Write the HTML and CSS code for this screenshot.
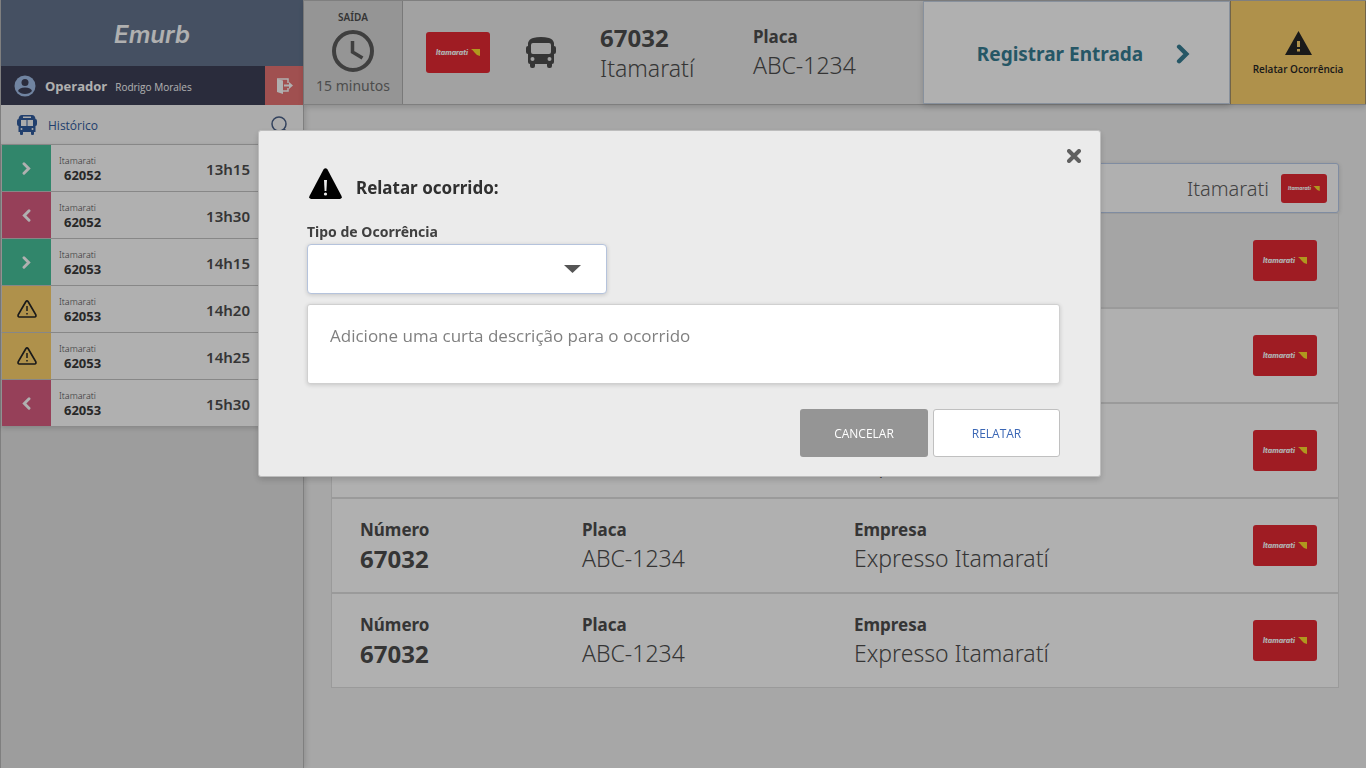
FILE: index.html
```html
<!DOCTYPE html>
<html lang="pt-BR">
<head>
<meta charset="utf-8">
<meta name="viewport" content="width=device-width, initial-scale=1">
<title>Emurb - Relatar ocorrido</title>
<link rel="stylesheet" href="styles.css">
</head>
<body>
<svg class="symbols" aria-hidden="true">
  <symbol id="bus" viewBox="0 0 30 31">
    <path fill="currentColor" fill-rule="evenodd" d="M7 1Q15-1 23 1Q27 2 28 6V9Q30 9 30 11V15Q30 17 28 17V25Q28 27 26 27V29Q26 31 24 31H23Q21 31 21 29V27H9V29Q9 31 7 31H6Q4 31 4 29V27Q2 27 2 25V17Q0 17 0 15V11Q0 9 2 9V6Q3 2 7 1ZM7 6Q5 6 5 8V15Q5 17 7 17H23Q25 17 25 15V8Q25 6 23 6ZM6.500 20A2 2 0 1 0 6.500 24A2 2 0 1 0 6.500 20ZM23.500 20A2 2 0 1 0 23.500 24A2 2 0 1 0 23.500 20Z"/>
  </symbol>
  <symbol id="bus-split" viewBox="0 0 20 20">
    <path fill="currentColor" fill-rule="evenodd" d="M5 0H15Q18 0 18.500 4Q20 4 20 6V9Q20 11 18.500 11V17H17V19Q17 20 16 20H15Q14 20 14 19V17H6V19Q6 20 5 20H4Q3 20 3 19V17H1.500V11Q0 11 0 9V6Q0 4 1.500 4Q2 0 5 0ZM6 1.500V3H14V1.500ZM4 5V11H9.500V5ZM10.500 5V11H16V5ZM4.500 13A1 1 0 1 0 4.500 15A1 1 0 1 0 4.500 13ZM15.500 13A1 1 0 1 0 15.500 15A1 1 0 1 0 15.500 13Z"/>
  </symbol>
  <symbol id="chevron" viewBox="0 0 12 18">
    <path d="M2.500 2.500L9 9L2.500 15.500" fill="none" stroke="currentColor" stroke-width="4" stroke-linecap="round"/>
  </symbol>
  <symbol id="warning-line" viewBox="0 0 20 18">
    <path d="M8.800 1.800Q10 0 11.200 1.800L18.700 14.500Q19.500 16.800 17.500 17H2.500Q.5 16.800 1.300 14.500Z" fill="none" stroke="currentColor" stroke-width="1.700"/>
    <path d="M10 6V11M10 13V14.500" stroke="currentColor" stroke-width="1.500"/>
  </symbol>
  <symbol id="flag" viewBox="0 0 9 7">
    <path fill="currentColor" d="M0 0H9V7Q5 6 3.500 3.500Q2 1 0 0Z"/>
  </symbol>
</svg>

<div class="app">
  <aside class="sidebar">
    <div class="brand">Emurb</div>
    <div class="user">
      <svg class="avatar" viewBox="0 0 22 22" aria-hidden="true"><circle cx="11" cy="11" r="10.500" fill="#a3bfe9"/><circle cx="11" cy="7.500" r="3.500" fill="#3e4158"/><path d="M4 16Q5 12.500 11 12.500T18 16Q15.500 19 11 19T4 16Z" fill="#3e4158"/></svg>
      <strong class="user-role">Operador</strong>
      <span class="user-name">Rodrigo Morales</span>
      <button class="logout" type="button" aria-label="Sair">
        <svg width="17" height="16" viewBox="0 0 17 16" aria-hidden="true"><path d="M1 1L7 2.500V16L1 14Z" fill="currentColor"/><path d="M1 1H12V5M12 10V13H7" fill="none" stroke="currentColor" stroke-width="1.500"/><path d="M8 6.500H13V4L17 7.500L13 11V8.500H8Z" fill="currentColor"/></svg>
      </button>
    </div>
    <div class="history-head">
      <svg class="history-bus" aria-hidden="true"><use href="#bus-split"/></svg>
      <h2>Histórico</h2>
      <button class="search-button" type="button" aria-label="Buscar">
        <svg width="18" height="18" viewBox="0 0 18 18" aria-hidden="true"><circle cx="8" cy="8" r="7" fill="none" stroke="currentColor" stroke-width="1.500"/><path d="M13 13L17 17" stroke="currentColor" stroke-width="1.500"/></svg>
      </button>
    </div>
    <ul class="history">
      <li><span class="tag tag-in"><svg class="arrow"><use href="#chevron"/></svg></span><span class="trip"><small>Itamarati</small><b>62052</b></span><time>13h15</time></li>
      <li><span class="tag tag-out"><svg class="arrow arrow-left"><use href="#chevron"/></svg></span><span class="trip"><small>Itamarati</small><b>62052</b></span><time>13h30</time></li>
      <li><span class="tag tag-in"><svg class="arrow"><use href="#chevron"/></svg></span><span class="trip"><small>Itamarati</small><b>62053</b></span><time>14h15</time></li>
      <li><span class="tag tag-alert"><svg class="alert"><use href="#warning-line"/></svg></span><span class="trip"><small>Itamarati</small><b>62053</b></span><time>14h20</time></li>
      <li><span class="tag tag-alert"><svg class="alert"><use href="#warning-line"/></svg></span><span class="trip"><small>Itamarati</small><b>62053</b></span><time>14h25</time></li>
      <li><span class="tag tag-out"><svg class="arrow arrow-left"><use href="#chevron"/></svg></span><span class="trip"><small>Itamarati</small><b>62053</b></span><time>15h30</time></li>
    </ul>
  </aside>

  <div class="content">
    <header class="topbar">
      <div class="departure">
        <span class="departure-label">SAÍDA</span>
        <svg class="clock" viewBox="0 0 42 42" aria-hidden="true"><circle cx="21" cy="21" r="19" fill="none" stroke="currentColor" stroke-width="4"/><path d="M20.500 11V22L30.500 28" fill="none" stroke="currentColor" stroke-width="3.500"/></svg>
        <span class="departure-time">15 minutos</span>
      </div>
      <div class="current">
        <span class="logo"><span>Itamarati</span><svg><use href="#flag"/></svg></span>
        <svg class="current-bus" aria-hidden="true"><use href="#bus"/></svg>
        <div class="current-id"><strong>67032</strong><span>Itamaratí</span></div>
        <dl class="field"><dt>Placa</dt><dd>ABC-1234</dd></dl>
      </div>
      <button class="register" type="button">Registrar Entrada <svg><use href="#chevron"/></svg></button>
      <button class="report" type="button">
        <svg width="27" height="24" viewBox="0 0 27 24" aria-hidden="true"><path fill="currentColor" fill-rule="evenodd" d="M13.500 0L27 24H0ZM12 10V16H15V10ZM12 18V20.500H15V18Z"/></svg>
        Relatar Ocorrência
      </button>
    </header>

    <main class="fleet">
      <div class="filter">
        <input type="search" aria-label="Buscar veículo">
        <span class="filter-company">Itamarati</span>
        <span class="logo logo-small"><span>Itamarati</span><svg><use href="#flag"/></svg></span>
      </div>
      <ul class="vehicles">
        <li class="selected"><dl class="field"><dt>Número</dt><dd class="number">67032</dd></dl><dl class="field"><dt>Placa</dt><dd>ABC-1234</dd></dl><dl class="field"><dt>Empresa</dt><dd>Expresso Itamaratí</dd></dl><span class="logo"><span>Itamarati</span><svg><use href="#flag"/></svg></span></li>
        <li><dl class="field"><dt>Número</dt><dd class="number">67032</dd></dl><dl class="field"><dt>Placa</dt><dd>ABC-1234</dd></dl><dl class="field"><dt>Empresa</dt><dd>Expresso Itamaratí</dd></dl><span class="logo"><span>Itamarati</span><svg><use href="#flag"/></svg></span></li>
        <li><dl class="field"><dt>Número</dt><dd class="number">67032</dd></dl><dl class="field"><dt>Placa</dt><dd>ABC-1234</dd></dl><dl class="field"><dt>Empresa</dt><dd>Expresso Itamaratí</dd></dl><span class="logo"><span>Itamarati</span><svg><use href="#flag"/></svg></span></li>
        <li><dl class="field"><dt>Número</dt><dd class="number">67032</dd></dl><dl class="field"><dt>Placa</dt><dd>ABC-1234</dd></dl><dl class="field"><dt>Empresa</dt><dd>Expresso Itamaratí</dd></dl><span class="logo"><span>Itamarati</span><svg><use href="#flag"/></svg></span></li>
        <li><dl class="field"><dt>Número</dt><dd class="number">67032</dd></dl><dl class="field"><dt>Placa</dt><dd>ABC-1234</dd></dl><dl class="field"><dt>Empresa</dt><dd>Expresso Itamaratí</dd></dl><span class="logo"><span>Itamarati</span><svg><use href="#flag"/></svg></span></li>
      </ul>
    </main>
  </div>
</div>

<div class="overlay">
  <form class="modal" role="dialog" aria-modal="true" aria-labelledby="modal-title">
    <button class="close" type="button" aria-label="Fechar">
      <svg width="14" height="14" viewBox="0 0 14 14" aria-hidden="true"><path d="M2 2L12 12M12 2L2 12" stroke="currentColor" stroke-width="4" stroke-linecap="round"/></svg>
    </button>
    <h1 class="modal-title" id="modal-title">
      <svg width="33" height="31" viewBox="0 0 33 31" aria-hidden="true"><path d="M14.500 1.500Q16.500-1 18.500 1.500L32.500 28Q33.500 30.500 31 31H2Q-.5 30.500 .5 28Z"/><path d="M15 12H18L17.400 23H15.600Z" fill="#ebebeb"/><circle cx="16.500" cy="26" r="1.600" fill="#ebebeb"/></svg>
      Relatar ocorrido:
    </h1>
    <label class="type-label" for="type">Tipo de Ocorrência</label>
    <select class="type" id="type"><option></option></select>
    <textarea class="description" aria-label="Descrição" placeholder="Adicione uma curta descrição para o ocorrido"></textarea>
    <div class="actions">
      <button class="cancel" type="button">CANCELAR</button>
      <button class="submit" type="submit">RELATAR</button>
    </div>
  </form>
</div>
</body>
</html>
```
FILE: styles.css
```css
* {
  box-sizing: border-box;
}

body {
  margin: 0;
  font-family: "Noto Sans", "Open Sans", sans-serif;
  color: #4e4e4e;
  background: #f2f2f2;
}

h1, h2, ul, dl, dd {
  margin: 0;
  padding: 0;
}

ul {
  list-style: none;
}

button, select, input, textarea {
  font-family: inherit;
}

button {
  border: 0;
  padding: 0;
}

.symbols {
  display: none;
}

.app {
  display: flex;
  min-height: 100vh;
}

/* Sidebar */
.sidebar {
  flex: 0 0 304px;
  background: #e4e4e4;
  border-left: 1px solid #b8b8b8;
  border-right: 1px solid #b8b8b8;
  box-shadow: 1px 0 6px rgba(0, 0, 0, 0.16);
}

.brand {
  display: flex;
  align-items: center;
  justify-content: center;
  height: 66px;
  padding-top: 2px;
  color: #fff;
  background: #64758f;
  font-family: Inter, "Noto Sans", sans-serif;
  font-size: 24px;
  font-weight: 600;
  font-style: italic;
}

.user {
  display: flex;
  align-items: center;
  height: 39px;
  padding-left: 13px;
  color: #fff;
  background: #3e4158;
  font-family: "Open Sans", "Noto Sans", sans-serif;
}

.avatar {
  width: 22px;
  height: 22px;
  margin-right: 9px;
}

.user-role {
  margin-right: 8px;
  font-size: 13px;
}

.user-name {
  padding-top: 2px;
  font-size: 10px;
}

.logout {
  display: flex;
  align-items: center;
  justify-content: center;
  width: 38px;
  height: 39px;
  margin-left: auto;
  color: #fff;
  background: #e87474;
}

.history-head {
  display: flex;
  align-items: center;
  height: 39px;
  padding: 0 14px 0 16px;
  background: #f9f9f9;
}

.history-bus {
  width: 20px;
  height: 20px;
  margin-right: 11px;
  color: #315c9f;
}

.history-head h2 {
  padding-top: 2px;
  color: #315c9f;
  font-family: "Open Sans", "Noto Sans", sans-serif;
  font-size: 12px;
  font-weight: 400;
}

.search-button {
  margin-left: auto;
  height: 18px;
  color: #4a6188;
  background: none;
}

.history {
  box-shadow: 0 2px 5px rgba(0, 0, 0, 0.16);
}

.history li {
  display: flex;
  align-items: center;
  height: 47px;
  padding-right: 53px;
  border-top: 1px solid #c4c4c4;
  border-left: 1px solid #d4d4d4;
  background: #fff;
}

.tag {
  display: flex;
  align-items: center;
  justify-content: center;
  width: 49px;
  height: 46px;
  color: #fff;
}

.tag-in {
  background: #47c29b;
}

.tag-out {
  background: #d95d82;
}

.tag-alert {
  color: #262626;
  background: #fed26d;
}

.arrow {
  width: 9px;
  height: 13px;
}

.arrow-left {
  transform: rotate(180deg);
}

.alert {
  width: 20px;
  height: 18px;
}

.trip {
  display: grid;
  margin-left: 8px;
}

.trip small {
  font-size: 9px;
  font-weight: 300;
  line-height: 14px;
}

.trip b {
  padding-left: 5px;
  color: #3a3a3a;
  font-size: 13px;
  line-height: 15px;
}

.history time {
  margin-left: auto;
  padding-top: 2px;
  font-size: 15px;
  font-weight: 600;
}

/* Top bar */
.content {
  flex: 1;
  min-width: 0;
}

.topbar {
  display: flex;
  height: 105px;
  background: #ebebeb;
  border-top: 1px solid #b8b8b8;
  border-bottom: 1px solid #b8b8b8;
  box-shadow: 0 2px 6px rgba(0, 0, 0, 0.16);
}

.departure {
  display: flex;
  flex-direction: column;
  align-items: center;
  width: 99px;
  padding-top: 8px;
  background: #d8d8d8;
  border-right: 1px solid #b0b0b0;
}

.departure-label {
  font-size: 10px;
  font-weight: 600;
  line-height: 16px;
}

.clock {
  width: 42px;
  height: 42px;
  margin: 5px 0 4px;
  color: #5c5c5c;
}

.departure-time {
  color: #707070;
  font-size: 14px;
  line-height: 20px;
}

.current {
  display: flex;
  flex: 1;
  align-items: center;
  padding-left: 23px;
}

.current-bus {
  width: 30px;
  height: 31px;
  margin: 0 44px 0 36px;
}

.current-id {
  display: grid;
  width: 153px;
  font-size: 24px;
  line-height: 31px;
}

.current-id span {
  font-size: 23px;
  font-weight: 300;
}

.logo {
  display: flex;
  align-items: center;
  justify-content: center;
  gap: 3px;
  width: 64px;
  height: 41px;
  border-radius: 3px;
  color: #fff;
  background: #e62934;
  font-family: Inter, "Noto Sans", sans-serif;
  font-size: 7px;
  font-weight: 800;
  font-style: italic;
}

.logo svg {
  width: 9px;
  height: 7px;
  color: #ffdc2c;
}

.logo-small {
  gap: 2px;
  width: 46px;
  height: 29px;
  font-size: 5px;
}

.logo-small svg {
  width: 7px;
  height: 5px;
}

.field dt {
  font-size: 17px;
  font-weight: 700;
  line-height: 25px;
}

.field dd {
  font-size: 23px;
  font-weight: 300;
  line-height: 33px;
}

.field .number {
  font-size: 24px;
  font-weight: 700;
}

.register {
  display: flex;
  align-items: center;
  justify-content: center;
  gap: 33px;
  width: 307px;
  padding: 3px 0 0 14px;
  border: 1px solid #c5d2e4;
  color: #377e94;
  background: #fff;
  box-shadow: 0 2px 6px rgba(0, 0, 0, 0.16);
  font-size: 19px;
  font-weight: 700;
}

.register svg {
  width: 14px;
  height: 20px;
}

.report {
  display: flex;
  flex-direction: column;
  align-items: center;
  justify-content: center;
  gap: 7px;
  width: 136px;
  padding-top: 2px;
  border-left: 1px solid #a69269;
  border-right: 1px solid #a69269;
  color: #262626;
  background: #fed26d;
  font-family: "Open Sans", "Noto Sans", sans-serif;
  font-size: 10px;
  font-weight: 600;
}

/* Vehicle list */
.fleet {
  padding: 58px 27px 80px;
}

.filter {
  display: flex;
  align-items: center;
  height: 50px;
  padding-right: 11px;
  border: 1px solid #b9cbea;
  border-radius: 3px;
  background: #fff;
  box-shadow: 0 1px 4px rgba(0, 0, 0, 0.16);
}

.filter input {
  flex: 1;
  min-width: 0;
  height: 46px;
  border: 0;
  background: transparent;
}

.filter-company {
  margin-right: 12px;
  color: #606060;
  font-size: 20px;
  font-weight: 300;
}

.vehicles li {
  display: grid;
  grid-template-columns: 222fr 272fr 399fr 64px;
  align-items: center;
  height: 95px;
  padding: 0 21px 0 28px;
  border: 1px solid #e0e0e0;
  background: #fff;
}

.vehicles .selected {
  background: #efefef;
}

/* Modal */
.overlay {
  position: fixed;
  inset: 0;
  padding: 130px 265px 0 258px;
  background: rgba(0, 0, 0, 0.31);
}

.modal {
  position: relative;
  display: flex;
  flex-direction: column;
  align-items: flex-start;
  padding: 37px 40px 19px 48px;
  border: 1px solid #bdbdbd;
  border-radius: 3px;
  background: #ebebeb;
  box-shadow: 0 3px 6px rgba(0, 0, 0, 0.16);
}

.close {
  position: absolute;
  top: 18px;
  right: 19px;
  height: 14px;
  color: #606060;
  background: none;
  line-height: 0;
}

.modal-title {
  display: flex;
  align-items: flex-end;
  gap: 14px;
  height: 32px;
  padding-left: 2px;
  margin-bottom: 22px;
  color: #303030;
  font-size: 17px;
  font-weight: 700;
  line-height: 24px;
}

.modal-title svg {
  align-self: flex-start;
}

.type-label {
  margin-bottom: 2px;
  color: #404040;
  font-size: 14px;
  font-weight: 700;
  line-height: 20px;
}

.type {
  appearance: none;
  width: 300px;
  height: 50px;
  margin-bottom: 10px;
  padding: 0 50px 0 22px;
  border: 1px solid #b5c3dc;
  border-radius: 4px;
  background: #fff url("data:image/svg+xml,%3Csvg xmlns='http://www.w3.org/2000/svg' viewBox='0 0 17 8'%3E%3Cpath fill='%23555' d='M0 0H17L8.500 8Z'/%3E%3C/svg%3E") no-repeat right 25px center / 17px 8px;
  box-shadow: 0 1px 4px rgba(0, 0, 0, 0.16);
  font-size: 17px;
}

.description {
  align-self: stretch;
  height: 80px;
  margin-bottom: 25px;
  padding: 19px 22px;
  border: 1px solid #d0d0d0;
  border-radius: 3px;
  background: #fff;
  box-shadow: 0 1px 4px rgba(0, 0, 0, 0.16);
  font-family: "Open Sans", "Noto Sans", sans-serif;
  font-size: 17px;
  line-height: 24px;
  resize: none;
}

.description::placeholder {
  color: #808080;
}

.actions {
  display: flex;
  align-self: flex-end;
  gap: 5px;
}

.actions button {
  height: 48px;
  border-radius: 3px;
  font-family: "Open Sans", "Noto Sans", sans-serif;
  font-size: 12px;
}

.actions .cancel {
  width: 128px;
  color: #fff;
  background: #959595;
}

.actions .submit {
  width: 127px;
  border: 1px solid #c0c0c0;
  color: #3b67b5;
  background: #fff;
}
```
